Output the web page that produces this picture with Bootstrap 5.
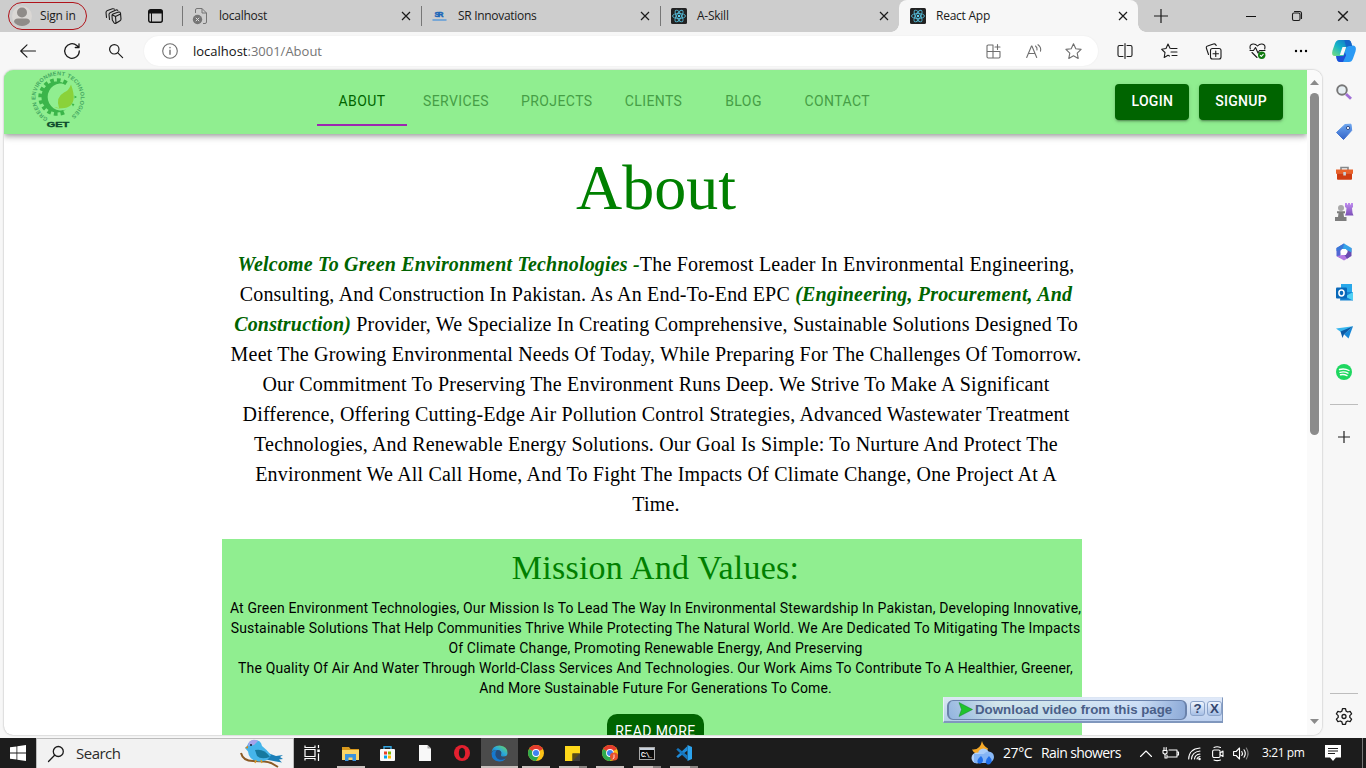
<!DOCTYPE html>
<html lang="en">
<head>
<meta charset="utf-8">
<title>React App</title>
<link href="https://cdn.jsdelivr.net/npm/bootstrap@5.3.0/dist/css/bootstrap.min.css" rel="stylesheet">
<script src="https://cdn.jsdelivr.net/npm/bootstrap@5.3.0/dist/js/bootstrap.bundle.min.js"></script>
<style>
body{width:1366px;height:768px;overflow:hidden;background:#f7f7f7;font-family:"Open Sans","Noto Sans",sans-serif;font-size:12px;line-height:1.3;color:#1b1b1b}
svg{display:block;flex:none;overflow:visible}
.ln{fill:none;stroke:#1b1b1b;stroke-width:1.1;stroke-linecap:round;stroke-linejoin:round}
.gy{stroke:#6f6f6f}
.wh{stroke:#fff}
.strip{height:32px;background:#cdcdcd}
.signin{width:79px;height:28px;margin-left:8px;border:1px solid #b0131a;border-radius:14px;padding-left:3px;gap:8px;letter-spacing:-.2px}
.btab{width:239px;height:32px;padding-left:10px}
.btab::before{content:"";width:1px;height:20px;background:#777;margin-left:-10px;margin-right:9px}
.btab.cur{background:#f7f7f7;border-radius:8px 8px 0 0}
.btab.cur::before,.btab.cur::after{content:"";position:absolute;width:8px;height:8px;bottom:0;margin:0}
.btab.cur::before{left:-8px;background:radial-gradient(circle at 0 0,#cdcdcd 7.5px,#f7f7f7 8px)}
.btab.cur::after{right:-8px;background:radial-gradient(circle at 100% 0,#cdcdcd 7.5px,#f7f7f7 8px)}
.tt{width:180px;white-space:nowrap;margin-left:10px;letter-spacing:-.25px}
.slot{display:flex;align-items:center;justify-content:center;flex:none}
.bar{height:38px}
.omni{width:954px;height:30px;border-radius:15px;background:#fff;box-shadow:0 0 2px rgba(0,0,0,.06)}
.url{font-size:13px;letter-spacing:0;width:792.5px;color:#757575}
.url b{font-weight:400;color:#111}
.mid{height:665px}
.view{width:1318px;margin-left:4px;border-radius:9px;overflow:hidden;background:#fff;box-shadow:0 0 2px rgba(0,0,0,.35)}
.page{width:1303px;overflow:hidden;font-family:Roboto,sans-serif}
.vbar{width:15px;background:#fafafa}
.thumb{width:9px;height:342px;border-radius:5px;background:#8b8b8b}
.appbar{height:64px;background:#90ee90;box-shadow:0 2px 4px -1px rgba(0,0,0,.2),0 4px 5px rgba(0,0,0,.14),0 1px 10px rgba(0,0,0,.12);padding:0 24px}
.ntab{height:48px;min-width:90px;padding:0 16px;font-size:14px;font-weight:400;letter-spacing:.4px;color:#469e46;border-bottom:2px solid transparent;display:flex;align-items:center;justify-content:center}
.ntab.sel{color:#006400;border-color:#9c27b0}
.btn.go{background:#006400;color:#fff;font-size:14px;font-weight:500;letter-spacing:.3px;line-height:24px;height:36px;padding:4px 15px;border-radius:4px;box-shadow:0 3px 1px -2px rgba(0,0,0,.2),0 2px 2px rgba(0,0,0,.14),0 1px 5px rgba(0,0,0,.12)}
.sf{font-family:"Liberation Serif",serif}
.ttl{font-size:64px;line-height:72px;color:green;margin:18px 0 0}
.intro{font-size:20px;line-height:30px;letter-spacing:.1876px;color:#000;margin:25px 0 0}
.intro em{font-weight:700;color:#006400}
.box{width:860px;margin-left:218px}
.mission{margin-top:20px;height:260px;background:#90ee90;padding-left:7px}
.mission h2{font-size:34px;line-height:42px;letter-spacing:.25px;color:green;margin:0;padding-top:8px;font-weight:400}
.mission p{font-size:14px;line-height:20px;color:#000;letter-spacing:.145px;margin:9px 0 16px}
.more{display:inline-block;background:#006400;color:#fff;width:97px;height:36px;border-radius:10px;font-size:14px;line-height:34px;letter-spacing:.4px}
.side{width:44px}
.side .slot{width:44px;height:40px}
.rule{width:28px;height:1px;background:#bdbdbd;margin:0 auto}
.dl{position:absolute;left:943px;top:697px;width:280px;height:26px;border:1px solid #8097bd;border-width:1px 1px 2px;border-top-color:#dce6f4;border-left-color:#eaf0f9;background:linear-gradient(rgba(222,232,248,.94),rgba(184,205,238,.94));font-family:"Liberation Sans",sans-serif;font-weight:700;color:#4a5f88;font-size:13.3px}
.dlb{width:240px;height:20px;border:1px solid #6a82ab;border-left-width:2px;border-right-width:2px;border-radius:6px;background:linear-gradient(90deg,rgba(120,160,215,.6),rgba(210,235,225,.35) 20%,rgba(185,215,245,.3) 80%,#8eabd8)}
.dlq{width:15px;height:15px;border:1px solid #8ba3c9;border-radius:3px;background:linear-gradient(#eff5fd,#a6bfe6);line-height:13px;text-align:center;color:#34466e}
.task{height:30px;background:#1c1c1c;margin-top:3px;color:#fff}
.find{width:258px;height:30px;background:#f2f2f2;border:1px solid #bcbcbc;border-bottom:0;color:#2b2b2b;font-size:15px}
.app{width:37px;height:30px;position:relative}
.app.run::after{content:"";position:absolute;left:5px;bottom:0;width:28px;height:2px;background:#c9c1be}
.app.dbl::after{background:linear-gradient(90deg,#c9c1be 20px,#8a8583 20px)}
.app.on{background:#4b4b4b}
.app.on::after{left:0;width:37px}
.wt{font-size:14px;letter-spacing:-.6px;white-space:nowrap}
</style>
</head>
<body>
<svg width="0" height="0" class="position-absolute">
<defs>
<symbol id="x" viewBox="0 0 10 10"><path d="M1 1l8 8M9 1l-8 8" fill="none" stroke="#1b1b1b" stroke-width="1.2"/></symbol>
<symbol id="react" viewBox="0 0 16 16"><rect width="16" height="16" rx="1.5" fill="#222"/><g fill="none" stroke="#53b8d4" stroke-width=".9"><ellipse cx="8" cy="8" rx="6.5" ry="2.5"/><ellipse cx="8" cy="8" rx="6.5" ry="2.5" transform="rotate(60 8 8)"/><ellipse cx="8" cy="8" rx="6.5" ry="2.5" transform="rotate(120 8 8)"/></g><circle cx="8" cy="8" r="1.2" fill="#61dafb"/></symbol>
<symbol id="chrome" viewBox="0 0 16 16"><circle cx="8" cy="8" r="8" fill="#fbc116"/><path d="M8 8L1.100 4A8 8 0 0 1 14.900 4z" fill="#e33b2e"/><path d="M8 8L1.100 4A8 8 0 0 0 8 16l3.500-6z" fill="#2da94f"/><circle cx="8" cy="8" r="3.900" fill="#fff"/><circle cx="8" cy="8" r="3" fill="#3f82f1"/></symbol>
<linearGradient id="gc" x1="0" y1="1" x2="1" y2="0"><stop offset="0" stop-color="#7be07c"/><stop offset=".45" stop-color="#14b4c8"/><stop offset="1" stop-color="#1464c8"/></linearGradient>
<linearGradient id="ge" x1="0" y1="1" x2="1" y2="0"><stop offset="0" stop-color="#0c59a4"/><stop offset=".5" stop-color="#2aa7dc"/><stop offset="1" stop-color="#6edc5a"/></linearGradient>
<linearGradient id="gp" x1="0" y1="0" x2="0" y2="1"><stop offset="0" stop-color="#c18cf0"/><stop offset="1" stop-color="#7c50b8"/></linearGradient>
<linearGradient id="gb" x1="0" y1="0" x2="0" y2="1"><stop offset="0" stop-color="#6ba4ee"/><stop offset="1" stop-color="#3565c8"/></linearGradient>
</defs>
</svg>

<header class="strip d-flex align-items-center">
  <div class="signin d-flex align-items-center">
    <svg width="20" height="20" viewBox="0 0 20 20"><circle cx="10" cy="10" r="10" fill="#dad7d4"/><circle cx="10" cy="6.500" r="5" fill="#8f8b88"/><path d="M2 16q0-3.500 4-3.500h8q4 0 4 3.500a10 10 0 0 1-16 0z" fill="#8f8b88"/></svg>
    <span class="text-nowrap">Sign in</span>
  </div>
  <div class="slot" style="width:52px"><svg width="17" height="16" viewBox="0 0 17 16" class="ln"><path d="M7 7.500q0-1 1-1.400l5.500-2q1.500-.4 2 1l.5 6q0 1-1 1.600l-4 2.500q-1.300.5-2-.5L7.300 12zM10.500 8.500l5-2.500M10.500 8.500L11 15M10.500 8.500L7.500 7M4.500 11.500L4 6.500Q4 5 5.500 4.400L11 2q1-.3 1.800.4M1.500 9.500L1 4.500Q1 3 2.500 2.500L7.500.8q1-.3 2 .3"/></svg></div>
  <div class="slot" style="width:32px"><svg width="15" height="14" viewBox="0 0 15 14"><rect x=".7" y=".7" width="13.600" height="12.600" rx="2" fill="none" stroke="#111" stroke-width="1.400"/><path d="M1 1h13v3.500H1z" fill="#111"/><path d="M3.500 4v9" stroke="#111"/></svg></div>
  <div class="btab d-flex align-items-center" style="margin-left:11px">
    <svg width="17" height="18" viewBox="0 0 17 18" fill="none" stroke="#757575"><path d="M3.500 6V3q0-1.500 1.500-1.500h5l4.500 4.500v9q0 1.500-1.500 1.500H11M10 1.500V6h4.500"/><circle cx="5.500" cy="12.500" r="4.700" fill="#757575" stroke="none"/><path d="M3.800 10.800l3.400 3.400m0-3.400l-3.400 3.400" stroke="#ddd"/></svg>
    <span class="tt">localhost</span><svg width="10" height="10" style="margin-left:2px"><use href="#x"/></svg>
  </div>
  <div class="btab d-flex align-items-center">
    <svg width="16" height="16" viewBox="0 0 16 16"><text x="3.500" y="9" font-family="Liberation Sans" font-size="7.500" font-weight="700" fill="#1d68b8" stroke="#1d68b8" stroke-width=".5" textLength="9">SR</text><path d="M1.500 12h14" stroke="#5c9bd8" stroke-width="1.500"/></svg>
    <span class="tt" style="margin-left:11px;letter-spacing:-.3px">SR Innovations</span><svg width="10" height="10" style="margin-left:2px"><use href="#x"/></svg>
  </div>
  <div class="btab d-flex align-items-center">
    <svg width="16" height="16" style="margin-left:1px"><use href="#react"/></svg>
    <span class="tt">A-Skill</span><svg width="10" height="10" style="margin-left:2px"><use href="#x"/></svg>
  </div>
  <div class="btab cur d-flex align-items-center position-relative">
    <svg width="16" height="16" style="margin-left:1px"><use href="#react"/></svg>
    <span class="tt">React App</span><svg width="10" height="10" style="margin-left:2px"><use href="#x"/></svg>
  </div>
  <div class="slot" style="width:45px"><svg width="14" height="14" viewBox="0 0 14 14"><path d="M7 0v14M0 7h14" stroke="#1b1b1b" stroke-width="1.200"/></svg></div>
  <div class="slot ms-auto" style="width:46px"><svg width="10" height="10" viewBox="0 0 10 10"><path d="M0 5.500h10" stroke="#111"/></svg></div>
  <div class="slot" style="width:46px"><svg width="10" height="10" viewBox="0 0 10 10" class="ln"><rect x=".5" y="2" width="7.500" height="7.500" rx="1.500"/><path d="M2.500.5h5q2 0 2 2v5"/></svg></div>
  <div class="slot" style="width:46px"><svg width="12" height="12"><use href="#x"/></svg></div>
</header>

<nav class="bar d-flex align-items-center">
  <div class="slot" style="width:44px;margin-left:6px"><svg width="16" height="14" viewBox="0 0 16 14" class="ln"><path d="M15.500 7H.7M7 .8L.7 7 7 13.200"/></svg></div>
  <div class="slot" style="width:44px"><svg width="16" height="16" viewBox="0 0 16 16" class="ln" style="stroke-width:1.300"><path d="M15.300 8a7.300 7.300 0 1 1-2.500-5.500L15 4.500M15 .8v3.700h-3.700"/></svg></div>
  <div class="slot" style="width:44px"><svg width="14" height="14" viewBox="0 0 14 14" class="ln" style="stroke-width:1.200"><circle cx="5.300" cy="5.300" r="4.700"/><path d="M8.800 8.800l4.800 4.800"/></svg></div>
  <div class="omni d-flex align-items-center" style="margin-left:6px">
    <div class="slot" style="width:49px;padding-left:3px"><svg width="16" height="16" viewBox="0 0 16 16" class="ln gy"><circle cx="8" cy="8" r="7.300"/><path d="M8 7.300v4M8 4.500v.3" stroke-width="1.400"/></svg></div>
    <div class="url"><b>localhost</b>:3001/About</div>
    <svg width="15" height="15" viewBox="0 0 15 15" class="ln gy"><path d="M7 1H2.200Q1 1 1 2.200V12.800Q1 14 2.200 14h10.600q1.200 0 1.200-1.200V7.500H1M7 1v13M11.500.5v5M9 3h5"/></svg>
    <svg width="16" height="15" viewBox="0 0 16 15" class="ln gy" style="margin-left:25px"><path d="M.7 13.500L5.500 2h.4l4.800 11.500M2.300 9.500h6.800M9.500 2q2 1.500 1.500 4M12 .7q3.500 2.500 2.500 6.500"/></svg>
    <svg width="17" height="16" viewBox="0 0 17 16" class="ln gy" style="margin-left:23px"><path d="M8.500.8l2.300 4.900 5.300.7-3.900 3.700 1 5.300-4.700-2.600-4.700 2.600 1-5.300L.9 6.400l5.300-.7z"/></svg>
  </div>
  <div class="slot" style="width:44px;margin-left:5px"><svg width="16" height="16" viewBox="0 0 16 16" class="ln"><path d="M6 2.500H2.500Q1 2.500 1 4v8q0 1.500 1.500 1.500H6M10 2.500h3.500Q15 2.500 15 4v8q0 1.500-1.500 1.500H10M8 .5v15"/></svg></div>
  <div class="slot" style="width:44px"><svg width="17" height="16" viewBox="0 0 17 16" class="ln"><path d="M10.500 5.500L9 5.200 7 1 5 5.500l-4.300.8L4 9.500 3.200 14.500 7 12.300l1.500.8M11 5.500h5M10 9h6M11 12.500h5"/></svg></div>
  <div class="slot" style="width:44px"><svg width="17" height="17" viewBox="0 0 17 17" class="ln"><rect x="5.500" y="5.500" width="10.500" height="10.500" rx="2"/><path d="M10.750 8v5.500M8 10.750h5.500M3.500 11.500L1.500 5.500Q.8 3.500 2.500 3l6-2q2-.5 2.700 1.500"/></svg></div>
  <div class="slot" style="width:44px"><svg width="17" height="16" viewBox="0 0 17 16" class="ln"><path d="M1.300 6Q0 1.500 4 1q2.500-.3 4.500 2 2-2.300 4.500-2 4 .5 2.700 5M1 7.500h3.500L6.500 4.500 9 10l1.500-2.500h5.500M3 9.500L8 14.500"/><circle cx="12.700" cy="12.300" r="3.700" fill="#107c10" stroke="none"/><path d="M11.300 12.300l1 1L14.200 11.300" stroke="#fff"/></svg></div>
  <div class="slot" style="width:44px"><svg width="14" height="4" viewBox="0 0 14 4"><circle cx="2" cy="2" r="1.200"/><circle cx="7" cy="2" r="1.200"/><circle cx="12" cy="2" r="1.200"/></svg></div>
  <div class="slot" style="width:42px"><svg width="24" height="22" viewBox="0 0 24 22"><path d="M17 22H8q-2.500 0-3.300-3L4 15h4l4.500-9.500H21q4 .5 2.500 6L21 18.500Q19.800 22 17 22z" fill="#2b9af5"/><path d="M4 15.500h4q2 0 3-3l1.500-2 1.500 5-3 6.500H8q-2.500 0-3.300-3z" fill="#1d50d6"/><path d="M7 0h9q2.500 0 3.300 3l.7 3h-3q-2 0-3 3l-2.500 7H3Q-1 16 .5 10.500L3 3.500Q4.200 0 7 0z" fill="url(#gc)"/><path d="M16 0q2.500 0 3.300 3l.7 3h-3l-3 1L12.500 0z" fill="#1565c8"/><path d="M10.500 7h3.700l-2.700 8H7.800z" fill="#f7f7f7"/></svg></div>
</nav>

<div class="mid d-flex">
  <main class="view d-flex">
    <div class="page">
      <div class="appbar d-flex align-items-center position-relative">
        <svg width="60" height="60" viewBox="0 0 60 60" style="margin-top:-4px">
          <path d="M38 14.400A15.500 15.500 0 1 0 38 39.600A13.500 13.500 0 1 1 38 14.400z" fill="#3bb54a"/>
          <path d="M38.500 13.200A16.700 16.700 0 1 0 38.500 40.800" fill="none" stroke="#3bb54a" stroke-width="4.200" stroke-dasharray="3.600 2.950"/>
          <path d="M31 38Q27.500 27 36 22.500q5-2 7-8 7 19-4 23-5 1.600-12.500-.5 2.500 1.700 4.500 1z" fill="#8ad23a"/>
          <path d="M46.500 25.500l2.500 1.500-2.500 1.500zM43.500 33.500l3 .5-1.500 2.500z" fill="#3bb54a"/>
          <path id="lp" d="M20 48A22.500 22.500 0 1 1 41.500 47.300" fill="none"/>
          <text font-family="Liberation Sans" font-weight="700" font-size="5.600" fill="#45a862"><textPath href="#lp" startOffset="0" textLength="116">GREEN ENVIRONMENT TECHNOLOGIES</textPath></text>
          <text x="18.800" y="57.300" font-family="Liberation Sans" font-weight="700" font-size="7.800" fill="#0b4a2c" stroke="#0b4a2c" stroke-width=".4" textLength="22.500" lengthAdjust="spacingAndGlyphs">GET</text>
        </svg>
        <div class="d-flex" style="margin-left:229px">
          <span class="ntab sel">ABOUT</span><span class="ntab">SERVICES</span><span class="ntab">PROJECTS</span><span class="ntab">CLIENTS</span><span class="ntab">BLOG</span><span class="ntab">CONTACT</span>
        </div>
        <a class="btn go ms-auto">LOGIN</a><a class="btn go" style="margin-left:10px">SIGNUP</a>
      </div>
      <div class="box text-center text-nowrap">
        <div class="ps-2">
          <h1 class="ttl sf fw-normal">About</h1>
          <p class="intro sf"><em>Welcome To Green Environment Technologies -</em>The Foremost Leader In Environmental Engineering,<br>Consulting, And Construction In Pakistan. As An End-To-End EPC <em>(Engineering, Procurement, And</em><br><em>Construction)</em> Provider, We Specialize In Creating Comprehensive, Sustainable Solutions Designed To<br>Meet The Growing Environmental Needs Of Today, While Preparing For The Challenges Of Tomorrow.<br>Our Commitment To Preserving The Environment Runs Deep. We Strive To Make A Significant<br>Difference, Offering Cutting-Edge Air Pollution Control Strategies, Advanced Wastewater Treatment<br>Technologies, And Renewable Energy Solutions. Our Goal Is Simple: To Nurture And Protect The<br>Environment We All Call Home, And To Fight The Impacts Of Climate Change, One Project At A<br>Time.</p>
        </div>
        <section class="mission">
          <h2 class="sf">Mission And Values:</h2>
          <p>At Green Environment Technologies, Our Mission Is To Lead The Way In Environmental Stewardship In Pakistan, Developing Innovative,<br>Sustainable Solutions That Help Communities Thrive While Protecting The Natural World. We Are Dedicated To Mitigating The Impacts<br>Of Climate Change, Promoting Renewable Energy, And Preserving<br>The Quality Of Air And Water Through World-Class Services And Technologies. Our Work Aims To Contribute To A Healthier, Greener,<br>And More Sustainable Future For Generations To Come.</p>
          <a class="more text-decoration-none">READ MORE</a>
        </section>
      </div>
    </div>
    <div class="vbar d-flex flex-column align-items-center">
      <svg width="9" height="5" viewBox="0 0 9 5" style="margin:10px 0 8px"><path d="M0 5L4.500 0 9 5z" fill="#8b8b8b"/></svg>
      <div class="thumb"></div>
      <svg width="9" height="5" viewBox="0 0 9 5" class="mt-auto" style="margin-bottom:11px"><path d="M0 0l4.500 5L9 0z" fill="#8b8b8b"/></svg>
    </div>
  </main>
  <aside class="side d-flex flex-column">
    <div class="slot" style="margin-top:2px"><svg width="16" height="16" viewBox="0 0 16 16"><circle cx="6" cy="6" r="4.800" fill="#e6eef2" stroke="#777" stroke-width="1.900"/><path d="M10 10l5 4.800" stroke="#a06fd6" stroke-width="2.800"/></svg></div>
    <div class="slot"><svg width="16" height="16" viewBox="0 0 16 16"><path d="M9 .5l6-.3.700 6.300L7.500 15.500.5 8.500z" fill="url(#gb)" stroke="url(#gb)" stroke-linejoin="round"/><circle cx="12" cy="4" r="1.600" fill="#fff" stroke="#33508c"/></svg></div>
    <div class="slot"><svg width="17" height="14" viewBox="0 0 17 14" style="margin-top:2px"><path d="M5 4V1.500h7V4" fill="none" stroke="#85888a" stroke-width="1.600"/><path d="M0 3.500h17v4.300H0z" fill="#e9622a"/><path d="M1 7.500h15V13q0 .8-1 .8H2q-1 0-1-.8z" fill="#cf3d12"/><rect x="7.300" y="6" width="2.600" height="3.500" fill="#c9d4dc"/></svg></div>
    <div class="slot"><svg width="18" height="18" viewBox="0 0 18 18"><path d="M10 0h2v1.500h1V0h2v1.500h1V0h2v4l-1 1 .5 5 1 2.500H10l1-2.500.5-5-1.500-1z" fill="url(#gp)"/><circle cx="6" cy="5" r="3" fill="#a9a9a9"/><path d="M2 8.200h8v2H8.500L9 14h2.500v4H0v-4h3l.5-3.800H2z" fill="#7d7d7d"/></svg></div>
    <div class="slot"><svg width="18" height="18" viewBox="0 0 18 18"><path d="M9 .5L1.500 5v8l4 2.300V7.500L11 3z" fill="#5267d4"/><path d="M1.500 13L9 17.500 14 14.500l-3-4-5.500 2z" fill="#b378e2"/><path d="M16.500 5v8L12 15.700 9.500 12l3-3V6.300z" fill="#6a4ab0"/><path d="M9 .5L16.500 5v4.500L12 7 6 5.500z" fill="#36a3e8"/><path d="M9 .5L1.500 5v3L8 5.500z" fill="#3a78d8"/><path d="M7.200 6h3.600l1.700 3-1.700 3H7.200L5.500 9z" fill="#fff"/></svg></div>
    <div class="slot"><svg width="17" height="17" viewBox="0 0 17 17"><path d="M5 0h11v9H5z" fill="#28a8ea"/><path d="M5 8h12v8.500H4z" fill="#1583d2"/><path d="M17 8v8.500L9 12.500z" fill="#50d0f4"/><rect y="3.500" width="11" height="11" rx="1" fill="#0868b9"/><ellipse cx="5.500" cy="9" rx="2.600" ry="2.900" fill="none" stroke="#fff" stroke-width="1.500"/></svg></div>
    <div class="slot"><svg width="17" height="13" viewBox="0 0 17 13"><path d="M0 2.500L17 .3l-9 8z" fill="#37b6ee"/><path d="M17 .3L12.500 12.500 8 8.300z" fill="#1687d8"/><path d="M4.500 5.500L17 .3 8 8.300 6.500 12z" fill="#0c59a4"/></svg></div>
    <div class="slot"><svg width="16" height="16" viewBox="0 0 16 16"><circle cx="8" cy="8" r="8" fill="#1ed760"/><path d="M3.500 5.500q5-1.500 9.500 1M4 8.300q4.200-1.200 8 .8M4.500 10.800q3.500-.8 6.500.8" fill="none" stroke="#fff" stroke-width="1.400" stroke-linecap="round"/></svg></div>
    <div class="rule" style="margin-top:12px"></div>
    <div class="slot" style="margin-top:12px"><svg width="12" height="12" viewBox="0 0 12 12"><path d="M6 0v12M0 6h12" stroke="#222" stroke-width="1.200"/></svg></div>
    <div class="rule mt-auto"></div>
    <div class="slot" style="margin-top:2px;margin-bottom:-1px"><svg width="16" height="17" viewBox="0 0 16 17" class="ln" style="stroke-width:1.300"><path d="M6.500.7h3l.6 2.400 1.600.9 2.400-.7 1.500 2.600-1.800 1.700v1.800l1.800 1.700-1.500 2.600-2.400-.7-1.600.9-.6 2.400h-3l-.6-2.400-1.600-.9-2.400.7L.4 11.100l1.800-1.700V7.600L.4 5.900l1.500-2.600 2.400.7 1.600-.9z"/><circle cx="8" cy="8.500" r="2"/></svg></div>
  </aside>
</div>

<div class="dl d-flex align-items-center">
  <div class="dlb d-flex align-items-center text-nowrap" style="margin-left:3px;padding-left:9px"><svg width="15" height="15" viewBox="0 0 15 15"><path d="M1 .5L14.500 7.500 1 14.500 3.500 7.500z" fill="#1fc32c" stroke="#15852a" stroke-width=".5"/></svg><span style="margin-left:2px">Download video from this page</span></div>
  <div class="dlq" style="margin:-3px 0 0 3px">?</div><div class="dlq" style="margin:-3px 0 0 2px">X</div>
</div>

<footer class="task d-flex align-items-center">
  <div class="slot" style="width:36px"><svg width="16" height="16" viewBox="0 0 16 16" fill="#fff"><path d="M0 2.300L6.500 1.400v6.200H0zM7.300 1.200L16 0v7.600H7.300zM0 8.400h6.500v6.200L0 13.700zM7.300 8.400H16V16l-8.700-1.200z"/></svg></div>
  <div class="find d-flex align-items-center">
    <svg width="16" height="16" viewBox="0 0 16 16" class="ln" style="margin-left:11px;stroke-width:1.300"><circle cx="10.300" cy="5.500" r="5"/><path d="M6.600 9.300L.5 15.500"/></svg>
    <span style="margin-left:12px;letter-spacing:-.5px">Search</span>
    <svg width="44" height="28" viewBox="0 0 44 28" class="ms-auto" style="margin-right:9px"><path d="M1 13q2 8 12 8 13 0 18 2l7 4" fill="none" stroke="#8b5a24" stroke-width="2"/><path d="M25 12l11 4 7-1-3 2 3 2-4 .5 3 3-6-1-10-2z" fill="#1b7fb8"/><path d="M7 6q2-6 8-6 6 0 7 6 4 3 9 9-3 7-12 6.500-10-1-11-10L5 8z" fill="#45b5ea"/><path d="M15 10q9-2 15 7-9 3-13-1z" fill="#16799f"/><path d="M9 2q4-4 9-1l-4 4-6 1z" fill="#a6a3ea"/><circle cx="11" cy="5" r="1" fill="#123"/><path d="M8 5.500L5 8l3 .5z" fill="#c98a2c"/><path d="M16 20l-1 3M21 20l1 3" stroke="#d99c2e" stroke-width="1.500"/></svg>
  </div>
  <div class="slot" style="width:38px;padding-right:1px"><svg width="17" height="16" viewBox="0 0 17 16" fill="none" stroke="#fff" stroke-width="1.200"><path d="M1 4.500h10v7H1zM1 .5v2h10v-2M1 15.500v-2h10v2M14.500 0v3M14.500 8.500V16"/><path d="M13.300 4.500h2.500V7h-2.500z" fill="#fff" stroke="none"/></svg></div>
  <div class="slot app run"><svg width="17" height="15" viewBox="0 0 17 15"><path d="M0 1h7l1.500 2H17v3H0z" fill="#d9991d"/><path d="M0 4h17v10H0z" fill="#fbd667"/><path d="M3 15V8h11v7h-3.500v-3.500h-4V15z" fill="#3b93dc"/></svg></div>
  <div class="slot app"><svg width="15" height="15" viewBox="0 0 15 15"><path d="M4 4V.7h7V4" fill="none" stroke="#32a4e0" stroke-width="1.400"/><rect y="3" width="15" height="12" rx="1" fill="#fafafa"/><path d="M4 5.500h3v3H4z" fill="#e8432b"/><path d="M8 5.500h3v3H8z" fill="#7fba00"/><path d="M4 9.500h3v3H4z" fill="#00a4ef"/><path d="M8 9.500h3v3H8z" fill="#ffb900"/></svg></div>
  <div class="slot app"><svg width="12" height="16" viewBox="0 0 12 16"><path d="M0 0h8.500L12 3.500V16H0z" fill="#f8f8f8"/><path d="M8.500 0v3.500H12z" fill="#aaa"/></svg></div>
  <div class="slot app"><svg width="16" height="16" viewBox="0 0 16 16"><circle cx="8" cy="8" r="8" fill="#e3202f"/><ellipse cx="8" cy="8" rx="3.200" ry="5.300" fill="#1c1c1c"/></svg></div>
  <div class="slot app on run" style="left:1px"><svg width="17" height="17" viewBox="0 0 17 17"><path d="M.5 7Q1.500.5 8.500.5q8 .5 8 7.500 0 3.500-4 3.500-3 0-2.500-1.500Q11.500 5 6 5 2 5 .5 7z" fill="url(#ge)"/><path d="M.5 8Q2 5 6 5q-2 2-1.500 5 1 5 7 4.500l3.500-1Q12 17 8 16.500.5 16 .5 8z" fill="#1679cf"/><path d="M4.500 10Q4 7 6 5q4 0 4.500 3-2 2-.5 3.500 2 1.500 5 1-3 3-6 2.500-3.500-1-4.500-5z" fill="#0d4f9c" opacity=".6"/></svg></div>
  <div class="slot app run"><svg width="16" height="16"><use href="#chrome"/></svg></div>
  <div class="slot app run dbl"><svg width="15" height="15" viewBox="0 0 15 15"><path d="M0 0h15v7.500L7.500 15H0z" fill="#ffd91a"/><path d="M7.500 7.500H15v7.500H7.500z" fill="#3d3d3d"/><path d="M7.500 15V7.500H15z" fill="#5a4c13"/></svg></div>
  <div class="slot app run"><svg width="16" height="16" viewBox="0 0 16 16"><use href="#chrome" width="16" height="16"/><circle cx="12" cy="11.500" r="4" fill="#e8502c"/><path d="M12 9.500v3.500l-1.500 1" stroke="#fbd9cf" fill="none"/></svg></div>
  <div class="slot app run dbl"><svg width="16" height="13" viewBox="0 0 16 13"><rect x=".5" y=".5" width="15" height="12" fill="#0a0a0a" stroke="#a9a9a9"/><path d="M1 1h14v2H1z" fill="#c8d1dc"/><text x="2" y="10" font-family="Liberation Mono" font-weight="700" font-size="6.500" fill="#fff" textLength="11">C:\_</text></svg></div>
  <div class="slot app run dbl"><svg width="16" height="16" viewBox="0 0 16 16"><path d="M11.500 0L16 2v12l-4.500 2z" fill="#2ba3ee"/><path d="M11.500 1v4.500L2 13 .3 11.500z" fill="#1f8ad6"/><path d="M11.500 15v-4.500L2 3 .3 4.500z" fill="#1676bd"/></svg></div>
  <div class="d-flex align-items-center ms-auto">
    <svg width="24" height="24" viewBox="0 0 24 24"><path d="M11 0q1 5 6 7.500-1 6-8 6-6-.5-8-5 8 1 10-8.500z" fill="#f6a928"/><circle cx="12.500" cy="13" r="5.500" fill="#a9cdfa"/><circle cx="17.500" cy="16" r="5.500" fill="#8ab9f6"/><circle cx="6" cy="17" r="5.500" fill="#b4d2fa"/><path d="M3 13h15v9H3z" fill="#84b4f5"/><path d="M10 15q3 3 1.500 6-2 3-4.500 1-2-3 3-7zM18 15q4 4 2 7-3 3-5 0-1-3 3-7z" fill="#1f6fea"/></svg>
    <span class="wt" style="margin-left:8px;width:38px;letter-spacing:-.4px">27°C</span><span class="wt" style="width:99px">Rain showers</span>
    <svg width="12" height="7" viewBox="0 0 12 7" class="ln wh"><path d="M.5 6.500L6 1l5.500 5.500"/></svg>
    <svg width="17" height="12" viewBox="0 0 17 12" class="ln wh" style="margin-left:10px"><path d="M7 3h8v7H5V8M15 5h1.500v3H15M1 3.500h4v2.500L3 7.500 1 6zM2 3.500v-3M4.200 3.500v-3M3 7.500V11h2"/></svg>
    <svg width="13" height="13" viewBox="0 0 13 13" class="ln wh" style="margin-left:9px"><path d="M.7 12Q1 2 12 1M3.500 12Q4 5 12 4M6.500 12q.5-4.500 5.500-5M9 12q.5-2 3-2.500"/><circle cx="11.500" cy="12" r=".7" fill="#fff"/></svg>
    <svg width="12" height="15" viewBox="0 0 12 15" class="ln wh" style="margin-left:11px"><rect x=".6" y="4" width="7.500" height="7.500" rx="1.500"/><path d="M8 7l3-2v5.500L8 8.800M2 1.500q3-1.500 6.500 0M2 14q3 1.300 6.500 0"/></svg>
    <svg width="16" height="13" viewBox="0 0 16 13" class="ln wh" style="margin-left:9px"><path d="M.6 4.500h2.500L6.500 1v11L3.100 8.500H.6zM8.800 4.500q1.300 2 0 4M11 2.800q2.500 3.700 0 7.400"/><path d="M13.300 1q3.500 5.500 0 11" stroke="#888"/></svg>
    <span style="margin-left:13px;width:43px;letter-spacing:-.4px" class="text-nowrap">3:21 pm</span>
    <svg width="16" height="16" viewBox="0 0 16 16" style="margin-left:20px"><path d="M0 0h16v12.500h-5L8 16l-3-3.500H0z" fill="#fff"/><path d="M3 3.500h10M3 6h10M3 8.500h7" stroke="#1c1c1c" stroke-width="1.200"/></svg>
    <div style="width:1px;height:30px;background:#777;margin:0 3px 0 21px"></div>
  </div>
</footer>
</body>
</html>
